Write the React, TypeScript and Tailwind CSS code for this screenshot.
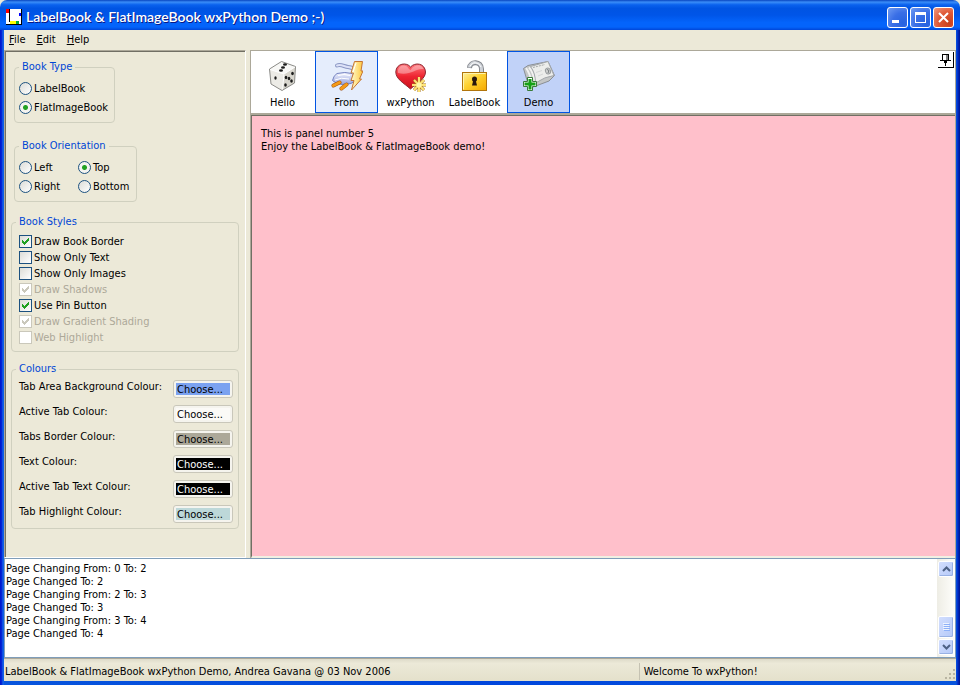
import { useState } from "react";
import type { ReactNode } from "react";

interface StyleOption {
  id: string;
  label: string;
  checked: boolean;
  disabled?: boolean;
}

const styleOptions: StyleOption[] = [
  { id: "border", label: "Draw Book Border", checked: true },
  { id: "text", label: "Show Only Text", checked: false },
  { id: "images", label: "Show Only Images", checked: false },
  { id: "shadows", label: "Draw Shadows", checked: true, disabled: true },
  { id: "pin", label: "Use Pin Button", checked: true },
  { id: "gradient", label: "Draw Gradient Shading", checked: true, disabled: true },
  { id: "web", label: "Web Highlight", checked: false, disabled: true },
];

const colours = [
  { id: "area", label: "Tab Area Background Colour:", swatch: "bg-[#7ba2f0] text-black" },
  { id: "active", label: "Active Tab Colour:", swatch: "bg-[#fbfaf7] text-black" },
  { id: "border", label: "Tabs Border Colour:", swatch: "bg-[#aca899] text-black" },
  { id: "text", label: "Text Colour:", swatch: "bg-black text-white" },
  { id: "activeText", label: "Active Tab Text Colour:", swatch: "bg-black text-white" },
  { id: "highlight", label: "Tab Highlight Colour:", swatch: "bg-[#bdd8d9] text-black" },
];

const initialLog = [
  "Page Changing From: 0 To: 2",
  "Page Changed To: 2",
  "Page Changing From: 2 To: 3",
  "Page Changed To: 3",
  "Page Changing From: 3 To: 4",
  "Page Changed To: 4",
];

function DiceIcon() {
  return (
    <svg width="32" height="32" viewBox="0 0 32 32" aria-hidden="true">
      <path d="M14.500 1.500 28.500 6.500 17.500 14 2.500 9Z" fill="#f8f8f6" />
      <path d="M2.500 9 17 14 15 30.500 4 24Z" fill="#ecebe6" />
      <path d="M17 14 28.500 6.500 27.500 23 15 30.500Z" fill="#d8d6ce" />
      <path d="M14.500 1.500 28.500 6.500 27.500 23 15 30.500 4 24 2.500 9Z" fill="none" stroke="#8b8b87" strokeLinejoin="round" />
      <path d="M3 9.500 17 14 28 7M17 14.500 15.500 29.500" fill="none" stroke="#fff" />
      <g fill="#1c1c1c">
        <ellipse cx="18" cy="4.500" rx="2" ry="1.200" />
        <ellipse cx="16" cy="7.500" rx="2" ry="1.200" />
        <ellipse cx="14" cy="10.500" rx="2" ry="1.200" />
        <ellipse cx="8.500" cy="18" rx="1.200" ry="1.700" />
        <ellipse cx="19" cy="17.500" rx="1.300" ry="1.700" />
        <ellipse cx="25.500" cy="13.500" rx="1.300" ry="1.700" />
        <ellipse cx="22" cy="18.500" rx="1.300" ry="1.700" />
        <ellipse cx="18.500" cy="25" rx="1.300" ry="1.700" />
        <ellipse cx="24.500" cy="21" rx="1.300" ry="1.700" />
      </g>
    </svg>
  );
}

function PlugIcon() {
  return (
    <svg width="32" height="32" viewBox="0 0 32 32" aria-hidden="true">
      <defs>
        <linearGradient id="plug" x1="0" y1="0" x2="0" y2="1">
          <stop offset="0" stopColor="#f2f4ff" />
          <stop offset="1" stopColor="#98a4dc" />
        </linearGradient>
        <linearGradient id="bolt" x1="0" y1="0" x2="1" y2="0">
          <stop offset="0" stopColor="#fffbd0" />
          <stop offset="1" stopColor="#ffc83c" />
        </linearGradient>
      </defs>
      <path d="M6 5.500C10 4 13 6.500 17 7s6 1 7 4" fill="none" stroke="#8b97c4" strokeWidth="4" strokeLinecap="round" />
      <path d="M6 5.500C10 4 13 6.500 17 7s6 1 7 4" fill="none" stroke="#dde2f8" strokeWidth="2" strokeLinecap="round" />
      <path d="M6 13.500q8-2 15 0 3 2 3 5-1 4-4 5l-9 1q-7-1-9.500-4 1-5 4.500-7Z" fill="url(#plug)" stroke="#7482c0" />
      <path d="M7 15.500q6-2 12 0M4 20q6-3 14-1" stroke="#fff" fill="none" />
      <path d="m2.500 25.500 6-3M10.500 28.500l5-4" stroke="#9d5216" strokeWidth="4" strokeLinecap="round" />
      <path d="m2.500 25.500 6-3M10.500 28.500l5-4" stroke="#f59a16" strokeWidth="3" strokeLinecap="round" />
      <path d="M23.500 1.500h8L30 11h2l-3.500 8h2L20.500 30l2.500-9.500h-3l2.500-7.500H20Z" fill="url(#bolt)" stroke="#c47434" strokeLinejoin="round" />
      <path d="m25 3-3 9" stroke="#fff" />
    </svg>
  );
}

function HeartIcon() {
  return (
    <svg width="32" height="32" viewBox="0 0 32 32" aria-hidden="true">
      <defs>
        <linearGradient id="heart" x1="0" y1="0" x2="0" y2="1">
          <stop offset="0" stopColor="#ff767b" />
          <stop offset="0.5" stopColor="#ee2431" />
          <stop offset="1" stopColor="#c8101c" />
        </linearGradient>
      </defs>
      <path d="M15.500 7C12 2 1 3 .8 12c0 7 8 11 14.700 17C22 23 30.500 19 30.500 12 30 3 20 2 15.500 7Z" fill="url(#heart)" stroke="#8d2831" />
      <path d="M3 13c-1-8 8-10 11-4l1.500 1c4-6 11-6 13-1-8-1-13 7-25.500 4Z" fill="#fff" opacity=".35" />
      <path d="M24 17v15M17 25h14M19 20l10 10M29 20 19 30" stroke="#a67520" strokeWidth="3" />
      <path d="M24 17v15M17 25h14M19 20l10 10M29 20 19 30" stroke="#ffe477" strokeWidth="2" />
      <circle cx="24" cy="25" r="2.500" fill="#fff8ae" />
    </svg>
  );
}

function LockIcon() {
  return (
    <svg width="32" height="32" viewBox="0 0 32 32" aria-hidden="true">
      <defs>
        <linearGradient id="lock" x1="0" y1="0" x2="1" y2="1">
          <stop offset="0" stopColor="#fff09a" />
          <stop offset="0.45" stopColor="#ffd230" />
          <stop offset="1" stopColor="#f4a800" />
        </linearGradient>
      </defs>
      <path d="M10.500 8C11 .5 22.500 1 22.500 9v5" fill="none" stroke="#85888e" strokeWidth="5" />
      <path d="M10.500 7.500C11 .5 22.500 1 22.500 9v5" fill="none" stroke="#ced2d8" strokeWidth="3" />
      <path d="M11 6.500C13 1 20 2 22 7" fill="none" stroke="#fff" />
      <rect x="3.500" y="12.500" width="24" height="18" fill="url(#lock)" stroke="#b1750c" />
      <path d="M4.500 29.500v-16h22" fill="none" stroke="#fff5ad" />
      <path d="M13 19a2.500 2.500 0 0 1 5 0q0 2-1 2.500l1 4h-5l1-4q-1-.5-1-2.500Z" fill="#28170c" />
    </svg>
  );
}

function MoneyIcon() {
  return (
    <svg width="32" height="32" viewBox="0 0 32 32" aria-hidden="true">
      <path d="M.5 8.500 5 5.500l20-4 6.500 14L26 21 10 27 4.500 22Z" fill="#c4c6c6" stroke="#8a8f95" strokeLinejoin="round" />
      <path d="M3 8q4 5 6 16M6 7.500q4 4 6 15" fill="none" stroke="#f2f2f0" strokeWidth="2" />
      <path d="M7.500 6.500 25 1.500l6 14q-9 1-18.500 7.500 0-10-5-16.500Z" fill="#ecedeb" stroke="#a3a7ab" strokeLinejoin="round" />
      <path d="m10 7.500 12-3" stroke="#a6a9aa" strokeDasharray="2 1" />
      <path d="m13 12.500 6-2M15 16l5-2" stroke="#d4d6d6" />
      <ellipse cx="25" cy="11" rx="2.500" ry="3" fill="#cfd1d1" stroke="#9b9fa1" transform="rotate(-20 25 11)" />
      <path d="m24 9.500 2 1-1 2.500" stroke="#747a7c" fill="none" />
      <path d="M4.500 17.500h5v4h4v5h-4v4h-5v-4h-4v-5h4Z" fill="#fff" stroke="#397b39" strokeLinejoin="round" />
      <path d="M7 19v10.500M1.500 24h11" stroke="#15a015" strokeWidth="3" />
    </svg>
  );
}

const tabs = [
  { label: "Hello", icon: <DiceIcon /> },
  { label: "From", icon: <PlugIcon /> },
  { label: "wxPython", icon: <HeartIcon /> },
  { label: "LabelBook", icon: <LockIcon /> },
  { label: "Demo", icon: <MoneyIcon /> },
];

function Group({ title, className, children }: { title: string; className: string; children: ReactNode }) {
  return (
    <fieldset className={`rounded-[4px] border border-[#d0d0bf] ${className}`}>
      <legend className="px-[3px] leading-[14px] text-[#0046d5]">{title}</legend>
      {children}
    </fieldset>
  );
}

interface RadioProps {
  name: string;
  label: string;
  value: string;
  onChange: (label: string) => void;
}

function Radio({ name, label, value, onChange }: RadioProps) {
  return (
    <label className="flex h-[19px] items-center gap-0.5 whitespace-nowrap">
      <input
        type="radio"
        name={name}
        checked={value === label}
        onChange={() => onChange(label)}
        className="size-[13px] shrink-0 appearance-none rounded-full border border-[#1d5281] bg-linear-to-br from-[#dcdcd7] to-white checked:bg-[radial-gradient(circle,#21a121_0px,#21a121_2px,#f4f4f1_3px)]"
      />
      {label}
    </label>
  );
}

function Check({ option, onToggle }: { option: StyleOption; onToggle: () => void }) {
  return (
    <label className={`flex h-4 items-center gap-0.5 ${option.disabled ? "text-[#aca899]" : ""}`}>
      <span className="grid size-[13px] shrink-0">
        <input
          type="checkbox"
          checked={option.checked}
          disabled={option.disabled}
          onChange={onToggle}
          className="col-start-1 row-start-1 size-[13px] appearance-none border border-[#1c5180] bg-linear-to-br from-[#dcdcd7] to-white disabled:border-[#cac8bb] disabled:from-white"
        />
        {option.checked && (
          <svg viewBox="0 0 13 13" className="pointer-events-none col-start-1 row-start-1" shapeRendering="crispEdges" aria-hidden="true">
            <path d="M3 5h1v1h1v1h1V6h1V5h1V4h1V3h1v3H9v1H8v1H7v1H6v1H5V9H4V8H3Z" fill={option.disabled ? "#cac8bb" : "#21a121"} />
          </svg>
        )}
      </span>
      {option.label}
    </label>
  );
}

function TitleBar() {
  const button = "flex size-[21px] items-center justify-center rounded-[3px] border border-white";
  const blue = "bg-[radial-gradient(circle_at_80%_80%,#2663e0_0%,#3a6fe6_50%,#6f9bf2_100%)]";
  return (
    <header className="flex h-[30px] shrink-0 items-center rounded-t-[7px] bg-[linear-gradient(180deg,#0845c0_0%,#3a8df8_7%,#0a62ee_16%,#0054e3_28%,#0055e8_50%,#0464fb_75%,#0464fb_90%,#0046d8_100%)] px-[6px] pt-1">
      <svg width="16" height="16" viewBox="0 0 16 16" shapeRendering="crispEdges" aria-hidden="true">
        <path d="M0 0h16v16H0Z" fill="#000" />
        <path d="M0 0h15v15H0Z" fill="#fff" />
        <path d="M0 0h3v4H0Z" fill="#f00" />
        <path d="M3 0h1v13H3Z" fill="#000" />
        <path d="M13 4h2v3h-2Z" fill="#00f" />
        <path d="M4 12h6v3H4Z" fill="#ff0" />
        <path d="M10 12h3v3h-3Z" fill="#0a3" />
      </svg>
      <h1 className="min-w-0 flex-1 truncate pl-1 font-['Lato',sans-serif] text-[14px] leading-[18px] font-semibold text-white [text-shadow:1px_1px_#0a1883]">
        LabelBook &amp; FlatImageBook wxPython Demo ;-)
      </h1>
      <div className="flex gap-0.5">
        <button type="button" aria-label="Minimize" className={`${button} ${blue}`}>
          <svg width="19" height="19" aria-hidden="true"><path d="M4 12h7v3H4Z" fill="#fff" /></svg>
        </button>
        <button type="button" aria-label="Maximize" className={`${button} ${blue}`}>
          <svg width="19" height="19" aria-hidden="true"><path d="M4 4h11v11H4Zm1 3v7h9V7Z" fill="#fff" fillRule="evenodd" /></svg>
        </button>
        <button type="button" aria-label="Close" className={`${button} bg-[radial-gradient(circle_at_80%_80%,#c8401c_0%,#df5836_50%,#f09a80_100%)]`}>
          <svg width="19" height="19" aria-hidden="true"><path d="m5 5 9 9m0-9-9 9" stroke="#fff" strokeWidth="2" /></svg>
        </button>
      </div>
    </header>
  );
}

function ScrollBar() {
  const button = "flex w-4 items-center justify-center rounded-[2px] border border-white bg-linear-to-br from-[#d2defe] to-[#b5c9f8] shadow-[inset_-1px_-1px_#98b1e4]";
  return (
    <div className="flex w-[18px] shrink-0 flex-col bg-linear-to-r from-[#eeede5] to-[#fefefb] py-0.5 pl-px">
      <button type="button" aria-label="Scroll up" className={`${button} h-4`}>
        <svg width="9" height="6" aria-hidden="true"><path d="m1 5 3.500-3.500L8 5" fill="none" stroke="#4d6185" strokeWidth="2" /></svg>
      </button>
      <div className="flex flex-1 flex-col justify-end pb-px">
        <div className={`${button} h-[22px]`}>
          <svg width="7" height="8" shapeRendering="crispEdges" aria-hidden="true">
            <path d="M0 0h6v1H0ZM0 2h6v1H0ZM0 4h6v1H0ZM0 6h6v1H0Z" fill="#eef4fe" />
            <path d="M1 1h6v1H1ZM1 3h6v1H1ZM1 5h6v1H1ZM1 7h6v1H1Z" fill="#8cb0f8" />
          </svg>
        </div>
      </div>
      <button type="button" aria-label="Scroll down" className={`${button} h-4`}>
        <svg width="9" height="6" aria-hidden="true"><path d="m1 1 3.500 3.500L8 1" fill="none" stroke="#4d6185" strokeWidth="2" /></svg>
      </button>
    </div>
  );
}

export default function App() {
  const [bookType, setBookType] = useState("FlatImageBook");
  const [orientation, setOrientation] = useState("Top");
  const [options, setOptions] = useState(styleOptions);
  const [page, setPage] = useState(4);
  const [log, setLog] = useState(initialLog);

  const toggle = (id: string) => {
    setOptions(options.map((o) => (o.id === id ? { ...o, checked: !o.checked } : o)));
  };

  const changePage = (next: number) => {
    if (next === page) return;
    setLog([...log, `Page Changing From: ${page} To: ${next}`, `Page Changed To: ${next}`]);
    setPage(next);
  };

  const tabClass = (index: number) => {
    if (index === page) return "border-[#0054e3] bg-[#c1d2f8]";
    if (index === 1) return "border-[#0054e3] bg-[#e5edfc]";
    return "border-transparent";
  };

  return (
    <div className="flex h-screen min-h-[600px] flex-col bg-[#ece9d8] font-['DejaVu_Sans_Condensed','DejaVu_Sans',sans-serif] text-[11px] leading-[13px] text-black">
      <TitleBar />
      {/* Window frame */}
      <div className="flex min-h-0 flex-1 flex-col bg-[linear-gradient(90deg,#0019cf_1px,#0831d9_2px,#166aee_3px,#0855dd_4px,#0046dc_50%,#0855dd_calc(100%-4px),#0441d8_calc(100%-3px),#0029bf_calc(100%-2px),#00138c_100%)] px-1 pb-1">
        <div className="flex min-h-0 flex-1 flex-col bg-[#ece9d8]">
          <nav className="flex h-5 shrink-0 gap-[11px] px-[5px] leading-[18px]">
            <button type="button"><u>F</u>ile</button>
            <button type="button"><u>E</u>dit</button>
            <button type="button"><u>H</u>elp</button>
          </nav>

          <div className="flex min-h-0 flex-1 gap-1">
            {/* Settings */}
            <aside className="flex w-[242px] shrink-0 flex-col overflow-hidden border border-t-[#aca899] border-r-white border-b-white border-l-[#aca899] px-[6px] pt-[9px] shadow-[inset_1px_1px_#716f64]">
              <Group title="Book Type" className="ml-[3px] w-[101px] px-[4px] pb-[5px]">
                <div className="pt-[5px]">
                  <Radio name="type" label="LabelBook" value={bookType} onChange={setBookType} />
                  <Radio name="type" label="FlatImageBook" value={bookType} onChange={setBookType} />
                </div>
              </Group>

              <Group title="Book Orientation" className="mt-4 ml-[3px] w-[123px] px-[4px] pb-[5px]">
                <div className="grid grid-cols-[59px_1fr] pt-[5px]">
                  {["Left", "Top", "Right", "Bottom"].map((side) => (
                    <Radio key={side} name="orientation" label={side} value={orientation} onChange={setOrientation} />
                  ))}
                </div>
              </Group>

              <Group title="Book Styles" className="mt-[13px] px-[4px] pb-[6px]">
                <div className="px-[3px] pt-1">
                  {options.map((option) => (
                    <Check key={option.id} option={option} onToggle={() => toggle(option.id)} />
                  ))}
                </div>
              </Group>

              <Group title="Colours" className="mt-[10px] px-[4px] pb-[5px]">
                <div className="flex flex-col gap-[7px] pt-1 pr-px pl-[3px]">
                  {colours.map((colour) => (
                    <div key={colour.id} className="flex h-[18px] items-start justify-between">
                      <label htmlFor={colour.id} className="whitespace-nowrap">{colour.label}</label>
                      <button id={colour.id} type="button" className="h-[18px] w-[60px] rounded-[3px] border border-[#c9c7ba] bg-[#f5f4ee] p-0.5">
                        <span className={`block h-3 pl-px text-left leading-[14px] ${colour.swatch}`}>Choose...</span>
                      </button>
                    </div>
                  ))}
                </div>
              </Group>
            </aside>

            {/* Notebook */}
            <main className="flex min-w-0 flex-1 flex-col border border-b-0 border-[#aca899] bg-white">
              <div className="flex h-16 shrink-0 justify-between border-b-2 border-[#aca899]">
                <div role="tablist" className="flex gap-px">
                  {tabs.map((tab, index) => (
                    <button
                      key={tab.label}
                      type="button"
                      role="tab"
                      aria-selected={index === page}
                      onClick={() => changePage(index)}
                      className={`flex w-[63px] flex-col items-center gap-1 border pt-2 whitespace-nowrap ${tabClass(index)}`}
                    >
                      {tab.icon}
                      {tab.label}
                    </button>
                  ))}
                </div>
                <button type="button" aria-label="Pin" className="mt-px mr-px flex size-4 items-center justify-center border-r border-b border-black">
                  <svg width="11" height="12" viewBox="0 0 11 12" shapeRendering="crispEdges" aria-hidden="true">
                    <path d="M2 0h7v6h2v1H6v5H5V7H0V6h2Z" fill="#000" />
                    <path d="M3 1h3v5H3Z" fill="#fff" />
                    <path d="M6 1h2v5H6Z" fill="#808080" />
                    <path d="M4 7h3v2H4Z" fill="#000" />
                  </svg>
                </button>
              </div>
              <section className="flex-1 border-t border-b-2 border-l border-t-[#716f64] border-b-[#f1efe2] border-l-[#716f64] bg-[#ffc0cb] px-[9px] pt-[11px]">
                <p>This is panel number {page + 1}</p>
                <p>Enjoy the LabelBook &amp; FlatImageBook demo!</p>
              </section>
            </main>
          </div>

          <div className="flex h-[100px] shrink-0 border border-[#7f9db9] bg-white">
            <textarea
              readOnly
              aria-label="Log"
              value={log.join("\n")}
              className="min-w-0 flex-1 resize-none overflow-hidden px-px pt-[3px] outline-none"
            />
            <ScrollBar />
          </div>

          <footer className="flex h-[23px] shrink-0 items-center border-t border-[#aca899] bg-linear-to-b from-[#dedbc9] via-[#ece9d8] via-20% to-[#e4e0cb] pt-0.5">
            <span className="flex-1 truncate pl-px">LabelBook &amp; FlatImageBook wxPython Demo, Andrea Gavana @ 03 Nov 2006</span>
            <span className="flex h-[17px] w-1/3 items-center justify-between border-l border-[#c5c2b2] pl-1">
              Welcome To wxPython!
              <svg width="12" height="12" className="self-end" shapeRendering="crispEdges" aria-hidden="true">
                <path d="M9 1h2v2H9ZM5 5h2v2H5ZM9 5h2v2H9ZM1 9h2v2H1ZM5 9h2v2H5ZM9 9h2v2H9Z" fill="#b8b4a2" />
              </svg>
            </span>
          </footer>
        </div>
      </div>
    </div>
  );
}
